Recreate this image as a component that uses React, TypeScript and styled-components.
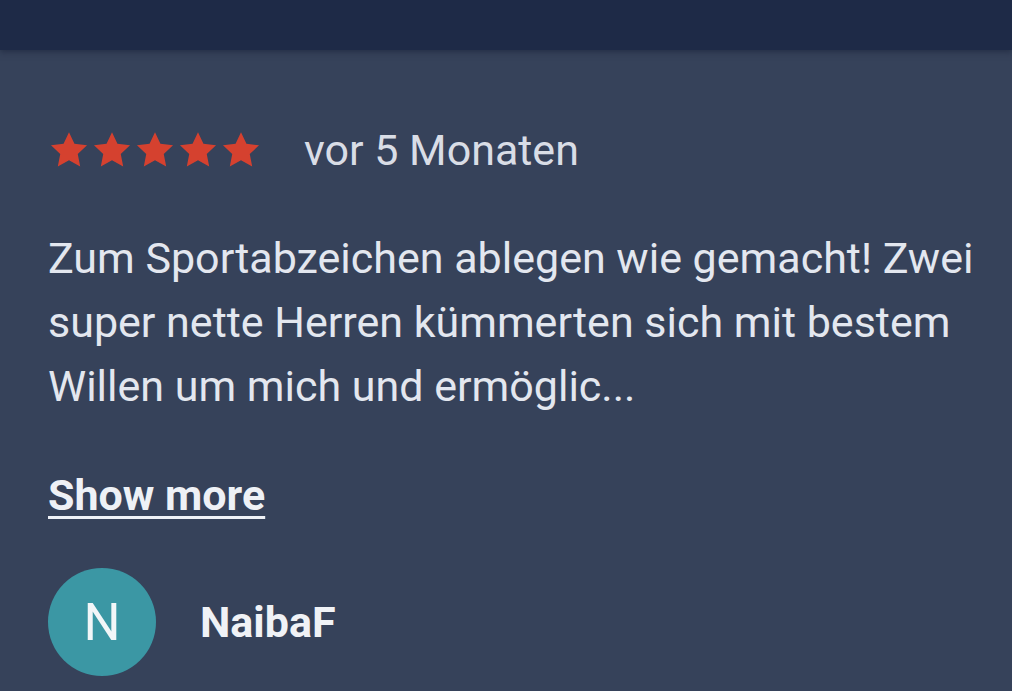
import styled, { createGlobalStyle } from "styled-components";

const GlobalStyle = createGlobalStyle`
    html, body {
        margin: 0;
        padding: 0;
        background-color: #36425a;
        font-family: Roboto, "Liberation Sans", sans-serif;
    }
`;

const Page = styled.div`
    width: 1012px;
    height: 691px;
    overflow: hidden;
    background-color: #36425a;
`;

const TopBar = styled.div`
    height: 50px;
    background-color: #1e2a47;
    box-shadow: 0 2px 6px rgba(20, 28, 50, 0.5);
`;

const Review = styled.div`
    display: flex;
    flex-direction: column;
    padding: 76px 0 0 48px;
    color: #e3e7ef;
    font-size: 43px;
`;

const RatingRow = styled.div`
    display: flex;
    align-items: center;
    height: 48px;
`;

const Stars = styled.div`
    display: flex;
    gap: 1px;
`;

const Age = styled.span`
    margin-left: 42px;
    color: #d9dde6;
`;

const Body = styled.p`
    margin: 52px 0 0;
    width: 950px;
    line-height: 64px;
`;

const ShowMore = styled.a`
    margin-top: 52px;
    align-self: flex-start;
    font-weight: 700;
    color: #eef1f6;
    text-decoration: underline;
    text-underline-offset: 6px;
    text-decoration-thickness: 3px;
`;

const Author = styled.div`
    display: flex;
    align-items: center;
    margin-top: 48px;
    gap: 44px;
`;

const Avatar = styled.div`
    width: 108px;
    height: 108px;
    border-radius: 50%;
    background-color: #3b97a4;
    display: flex;
    align-items: center;
    justify-content: center;
    font-size: 52px;
    color: #f2f6f8;
`;

const Name = styled.span`
    font-weight: 700;
    color: #f0f2f6;
`;

function Star() {
    return (
        <svg width="42" height="42" viewBox="0 0 24 24">
            <path fill="#d5412f" d="M12 1.8l3.1 6.6 7.2.9-5.3 5 1.4 7.1L12 17.9l-6.4 3.5 1.4-7.1-5.3-5 7.2-.9z" />
        </svg>
    );
}

function App() {
    return (
        <Page>
            <GlobalStyle />
            <TopBar />
            <Review>
                <RatingRow>
                    <Stars>
                        {[0, 1, 2, 3, 4].map(i => <Star key={i} />)}
                    </Stars>
                    <Age>vor 5 Monaten</Age>
                </RatingRow>
                <Body>
                    Zum Sportabzeichen ablegen wie gemacht! Zwei super nette Herren kümmerten sich mit bestem Willen um mich und ermöglic...
                </Body>
                <ShowMore>Show more</ShowMore>
                <Author>
                    <Avatar>N</Avatar>
                    <Name>NaibaF</Name>
                </Author>
            </Review>
        </Page>
    );
}

export default App;
